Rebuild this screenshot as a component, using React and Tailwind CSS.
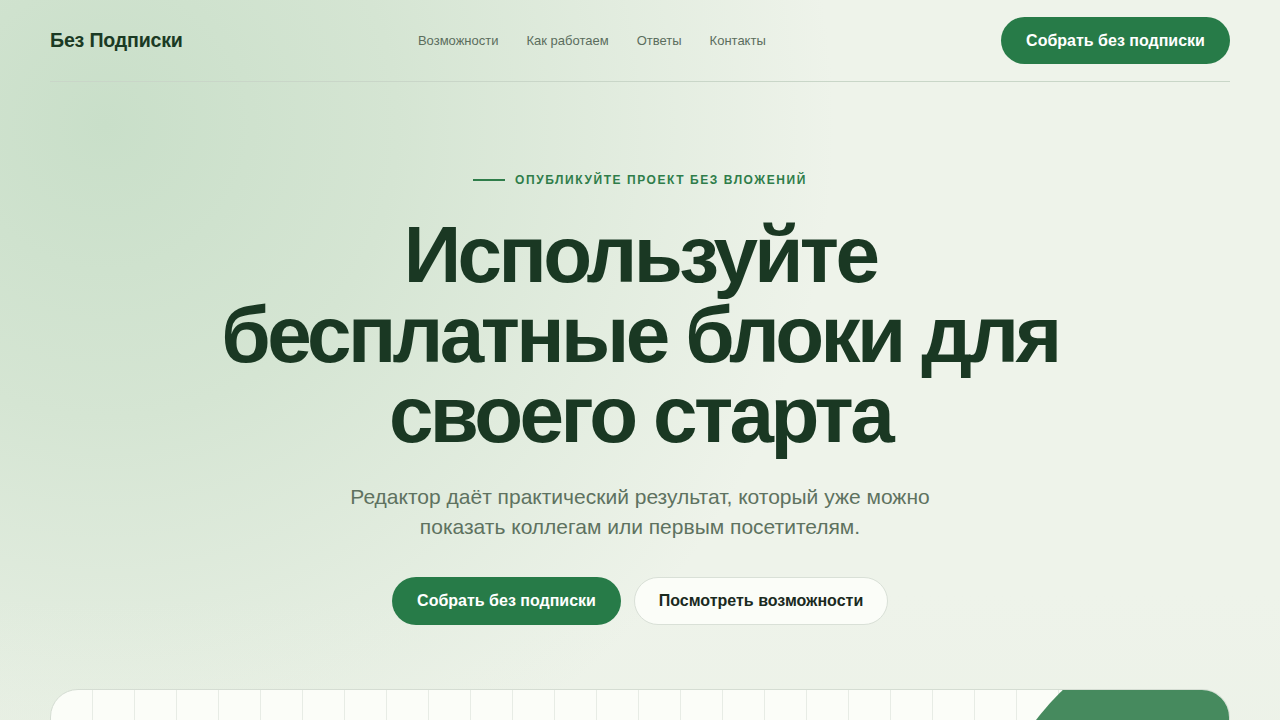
const navLinks = ['Возможности', 'Как работаем', 'Ответы', 'Контакты'];

function Header() {
  return (
    <header className="flex items-center justify-between py-[17px] border-b border-[#c9d6c8]">
      <a href="#" className="text-[19.6px] font-bold tracking-[-0.01em] text-[#1b3a24]">
        Без Подписки
      </a>
      <nav className="flex items-center gap-[28px]">
        {navLinks.map((link) => (
          <a key={link} href="#" className="text-[13px] text-[#5b6d5d]">
            {link}
          </a>
        ))}
      </nav>
      <button className="h-[47px] w-[229px] rounded-full bg-[#277b48] text-[16px] font-bold text-white">
        Собрать без подписки
      </button>
    </header>
  );
}

function Hero() {
  return (
    <section className="flex flex-col items-center pt-[90px] text-center">
      <div className="flex items-center gap-[10px]">
        <span className="block h-[2px] w-[32px] bg-[#2f7d4a]" />
        <span className="text-[12px] font-bold leading-4 tracking-[0.13em] text-[#2f7d4a]">
          ОПУБЛИКУЙТЕ ПРОЕКТ БЕЗ ВЛОЖЕНИЙ
        </span>
      </div>
      <h1 className="mt-[27px] max-w-[880px] text-[80px] font-bold leading-[80px] tracking-[-0.045em] text-[#1a3823]">
        Используйте бесплатные блоки для своего старта
      </h1>
      <p className="mt-[27px] max-w-[600px] text-[21px] leading-[30px] text-[#5e7260]">
        Редактор даёт практический результат, который уже можно показать коллегам или первым посетителям.
      </p>
      <div className="mt-[35px] flex items-center gap-[13px]">
        <button className="h-[48px] w-[229px] rounded-full bg-[#277b48] text-[16px] font-bold text-white">
          Собрать без подписки
        </button>
        <button className="h-[48px] w-[254px] rounded-full border border-[#d9e0d7] bg-[#fbfdf8] text-[16px] font-bold text-[#1a2a1e]">
          Посмотреть возможности
        </button>
      </div>
    </section>
  );
}

function Preview() {
  const cols = Array.from({ length: 28 });
  return (
    <div className="relative mt-[64px] h-[300px] overflow-hidden rounded-[28px] border border-[#d5ddd3] bg-[#fbfdf8]">
      <div className="flex h-full">
        {cols.map((_, i) => (
          <div key={i} className="h-full w-[42px] shrink-0 border-r border-[#e7ece5]" />
        ))}
      </div>
      <div className="absolute left-[921px] top-[-85px] h-[600px] w-[600px] rounded-full bg-[#468a5e]" />
    </div>
  );
}

export default function App() {
  return (
    <div
      className="relative min-h-screen overflow-hidden bg-[#eef3ea]"
      style={{ fontFamily: '"Liberation Sans", Arial, sans-serif' }}
    >
      <div className="pointer-events-none absolute inset-0 bg-[radial-gradient(circle_at_105px_125px,#c9dfc9_0%,#d5e5d3_20%,rgba(238,243,234,0)_50%)]" />
      <div className="pointer-events-none absolute inset-0 bg-[linear-gradient(180deg,rgba(238,243,234,0)_60%,rgba(233,240,228,0.8)_100%)]" />
      <div className="relative mx-auto max-w-[1180px]">
        <Header />
        <Hero />
        <Preview />
      </div>
    </div>
  );
}
